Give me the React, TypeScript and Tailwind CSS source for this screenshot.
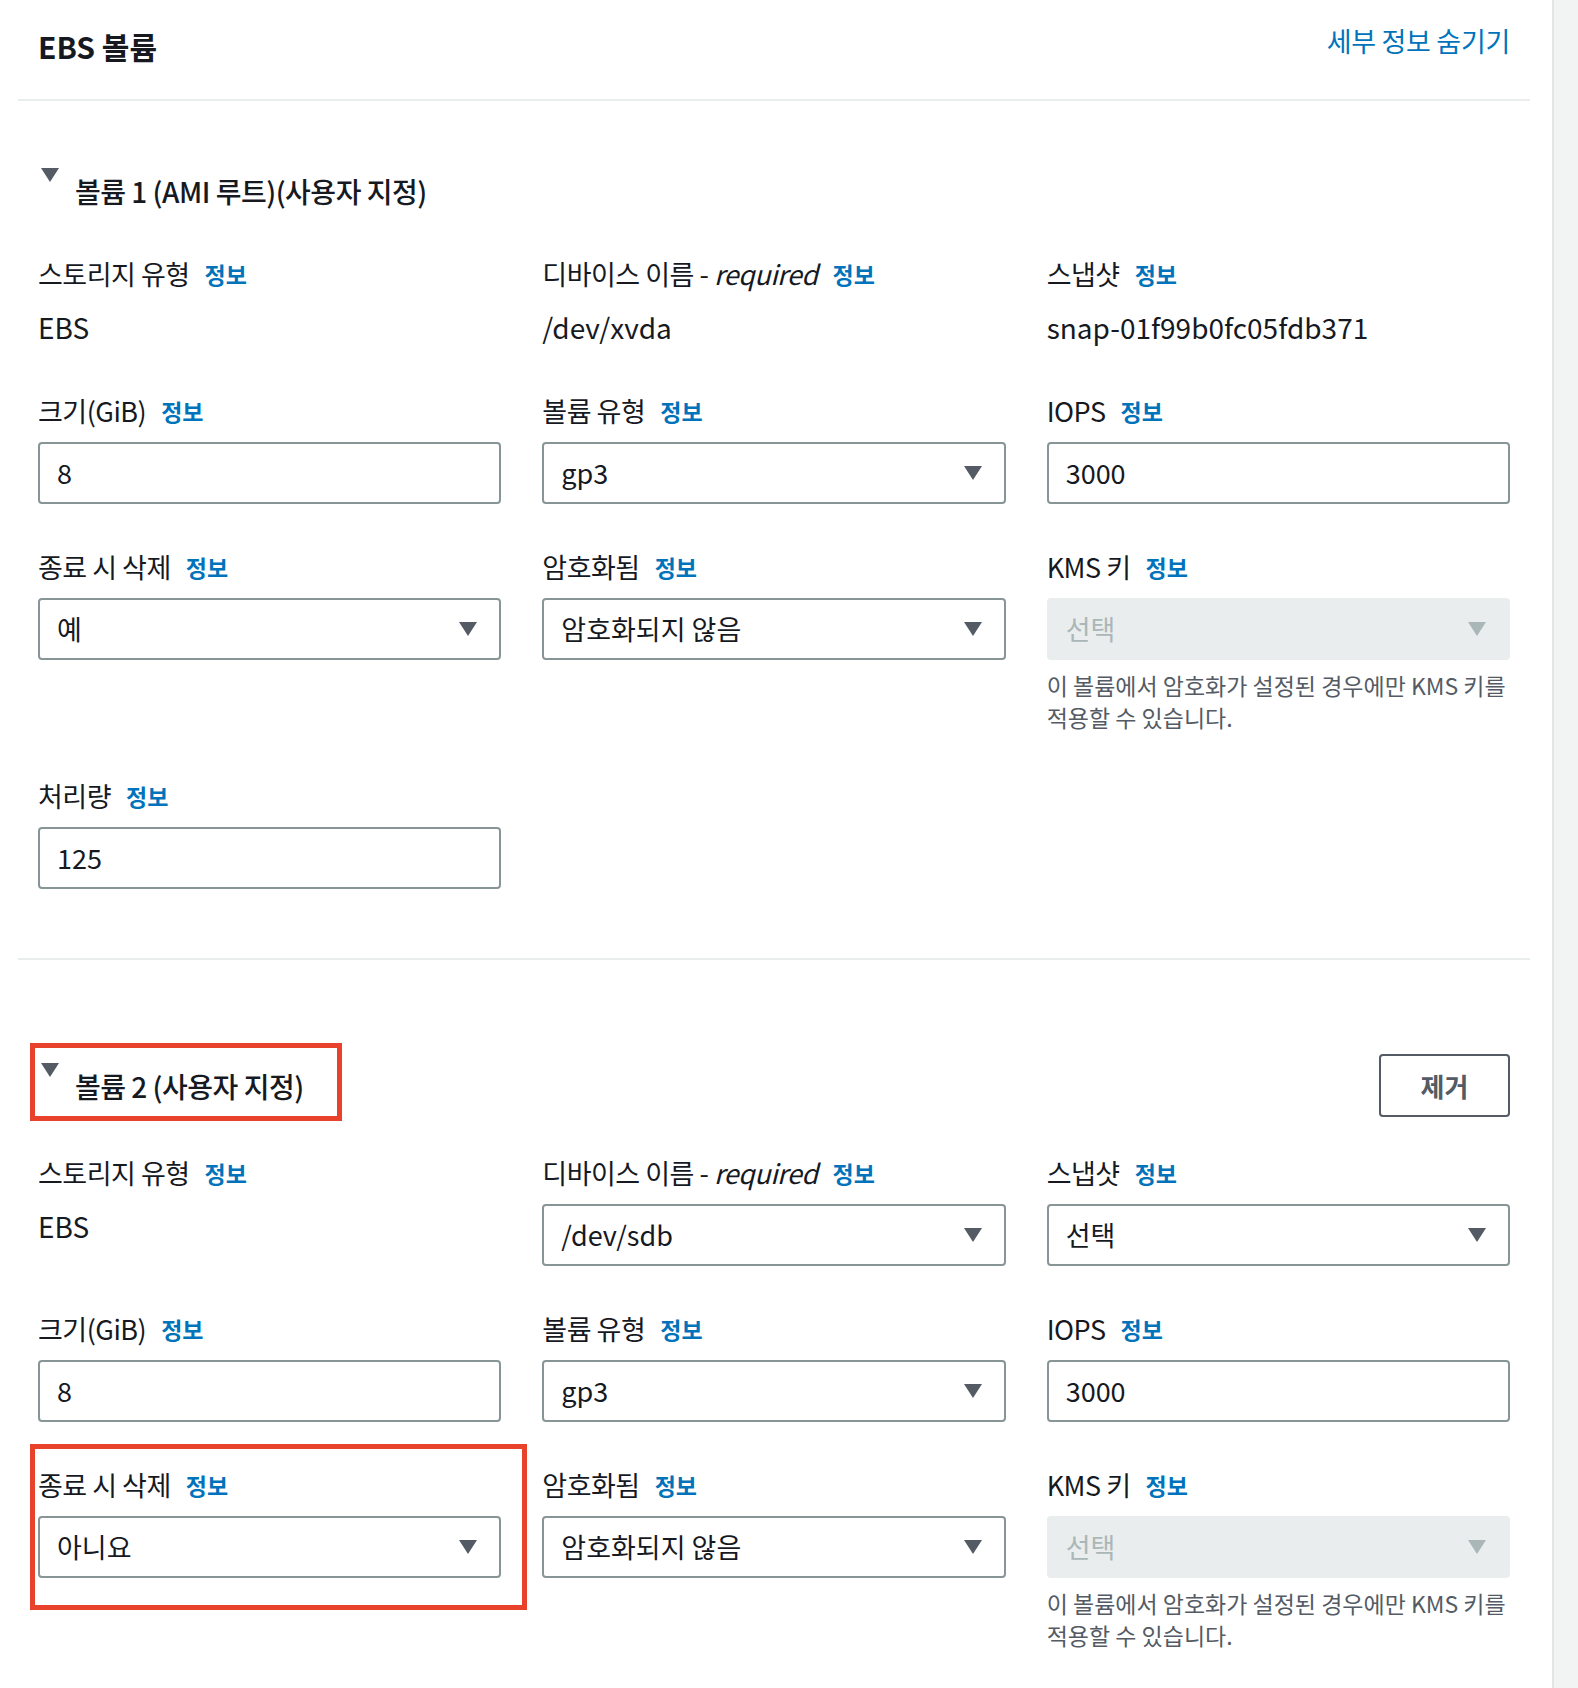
import React from "react";

const Info = () => (
    <span className="ml-[15px] text-[23px] font-bold text-[#0073bb] tracking-normal">
        정보
    </span>
);

const Caret = ({ color = "#545b64" }: { color?: string }) => (
    <svg width="20" height="16" viewBox="0 0 20 16" className="shrink-0">
        <path d="M1 1 H19 L10 15 Z" fill={color} />
    </svg>
);

function Field({
    label,
    children,
}: {
    label: React.ReactNode;
    children: React.ReactNode;
}) {
    return (
        <div className="flex flex-col">
            <div className="flex items-center h-[36px] text-[27px] tracking-[-0.5px] text-[#16191f]">
                {label}
                <Info />
            </div>
            {children}
        </div>
    );
}

const StaticValue = ({ value }: { value: string }) => (
    <div className="pt-[17px] pb-[3px] leading-[36px] text-[28px] text-[#16191f]">
        {value}
    </div>
);

const TextInput = ({ value }: { value: string }) => (
    <div className="mt-[13px] h-[62px] flex items-center px-[17px] border-2 border-[#879596] rounded-[4px] text-[27px] text-[#16191f] bg-white">
        {value}
    </div>
);

const Select = ({ value }: { value: string }) => (
    <div className="mt-[13px] h-[62px] flex items-center justify-between pl-[17px] pr-[21px] border-2 border-[#879596] rounded-[4px] text-[27px] text-[#16191f] bg-white">
        <span>{value}</span>
        <Caret />
    </div>
);

const DisabledSelect = () => (
    <>
        <div className="mt-[13px] h-[62px] flex items-center justify-between pl-[17px] pr-[21px] border-2 border-[#eaeded] rounded-[4px] text-[27px] text-[#aab7b8] bg-[#eaeded]">
            <span>선택</span>
            <Caret color="#aab7b8" />
        </div>
        <p className="mt-[9px] text-[23px] leading-[32px] text-[#545b64]">
            이 볼륨에서 암호화가 설정된 경우에만 KMS 키를
            <br />
            적용할 수 있습니다.
        </p>
    </>
);

const DeviceLabel = () => (
    <>
        디바이스 이름 -&nbsp;<i className="font-normal">required</i>
    </>
);

function VolumeHeading({
    title,
    removable,
    marked,
}: {
    title: string;
    removable?: boolean;
    marked?: boolean;
}) {
    return (
        <div className="flex items-center justify-between h-[63px]">
            <div className="relative flex items-start gap-[15px] pl-[2px]">
                <div className="-mt-[6px]">
                    <Caret />
                </div>
                <span className="leading-[36px] text-[28px] font-medium tracking-[-0.5px] text-[#16191f]">
                    {title}
                </span>
                {marked && (
                    <div className="absolute -left-[8px] -top-[25px] w-[312px] h-[78px] border-[5px] border-[#e8412c]" />
                )}
            </div>
            {removable && (
                <button className="w-[131px] h-[63px] border-2 border-[#545b64] rounded-[4px] bg-white text-[26px] font-bold text-[#545b64]">
                    제거
                </button>
            )}
        </div>
    );
}

export default function App() {
    return (
        <div className="w-[1578px] h-[1688px] flex bg-white overflow-hidden font-['Noto_Sans_CJK_KR','Noto_Sans',sans-serif]">
            <div className="flex-1 pl-[18px] pr-[22px]">
                {/* Header */}
                <div className="h-[99px] flex items-start justify-between px-[20px] pt-[26px]">
                    <h2 className="text-[30px] leading-[40px] font-bold text-[#16191f]">
                        EBS 볼륨
                    </h2>
                    <span className="-mt-[3px] text-[27px] leading-[36px] text-[#0073bb] tracking-[-0.3px]">
                        세부 정보 숨기기
                    </span>
                </div>
                <div className="h-[2px] bg-[#eaeded]" />

                {/* Volume 1 */}
                <div className="px-[20px] pt-[58px] pb-[69px]">
                    <VolumeHeading title="볼륨 1 (AMI 루트)(사용자 지정)" />
                    <div className="mt-[34px] grid grid-cols-3 gap-x-[41px] gap-y-[45px]">
                        <Field label="스토리지 유형">
                            <StaticValue value="EBS" />
                        </Field>
                        <Field label={<DeviceLabel />}>
                            <StaticValue value="/dev/xvda" />
                        </Field>
                        <Field label="스냅샷">
                            <StaticValue value="snap-01f99b0fc05fdb371" />
                        </Field>

                        <Field label="크기(GiB)">
                            <TextInput value="8" />
                        </Field>
                        <Field label="볼륨 유형">
                            <Select value="gp3" />
                        </Field>
                        <Field label="IOPS">
                            <TextInput value="3000" />
                        </Field>

                        <Field label="종료 시 삭제">
                            <Select value="예" />
                        </Field>
                        <Field label="암호화됨">
                            <Select value="암호화되지 않음" />
                        </Field>
                        <Field label="KMS 키">
                            <DisabledSelect />
                        </Field>

                        <Field label="처리량">
                            <TextInput value="125" />
                        </Field>
                    </div>
                </div>
                <div className="h-[2px] bg-[#eaeded]" />

                {/* Volume 2 */}
                <div className="px-[20px] pt-[94px]">
                    <VolumeHeading title="볼륨 2 (사용자 지정)" removable marked />
                    <div className="mt-[38px] grid grid-cols-3 gap-x-[41px] gap-y-[45px]">
                        <Field label="스토리지 유형">
                            <StaticValue value="EBS" />
                        </Field>
                        <Field label={<DeviceLabel />}>
                            <Select value="/dev/sdb" />
                        </Field>
                        <Field label="스냅샷">
                            <Select value="선택" />
                        </Field>

                        <Field label="크기(GiB)">
                            <TextInput value="8" />
                        </Field>
                        <Field label="볼륨 유형">
                            <Select value="gp3" />
                        </Field>
                        <Field label="IOPS">
                            <TextInput value="3000" />
                        </Field>

                        <div className="relative">
                            <Field label="종료 시 삭제">
                                <Select value="아니요" />
                            </Field>
                            <div className="absolute -left-[8px] -top-[23px] w-[497px] h-[166px] border-[5px] border-[#e8412c]" />
                        </div>
                        <Field label="암호화됨">
                            <Select value="암호화되지 않음" />
                        </Field>
                        <Field label="KMS 키">
                            <DisabledSelect />
                        </Field>
                    </div>
                </div>
            </div>
            {/* right gutter */}
            <div className="w-[26px] shrink-0 bg-[#f2f3f3] border-l-2 border-[#e3e6e6]" />
        </div>
    );
}
